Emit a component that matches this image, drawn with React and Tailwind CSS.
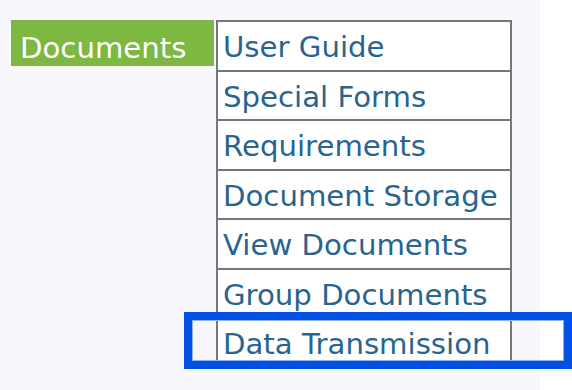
import React from "react";

const items = [
  "User Guide",
  "Special Forms",
  "Requirements",
  "Document Storage",
  "View Documents",
  "Group Documents",
  "Data Transmission",
];

export default function App() {
  return (
    <div
      className="relative w-[572px] h-[390px] bg-white overflow-hidden"
      style={{ fontFamily: '"DejaVu Sans", Verdana, sans-serif' }}
    >
      <div className="w-[540px] h-[390px] bg-[#f7f7fc] flex items-start pl-[11px] pt-[20px] gap-[2px]">
        <div className="w-[203px] h-[46px] bg-[#7db842] text-white text-[29.2px] leading-[46px] pl-[9px] pt-[5px]">
          Documents
        </div>
        <div className="w-[296px] border-x-2 border-b-2 border-[#74777c] bg-white">
          {items.map((t) => (
            <div
              key={t}
              className="h-[49.5px] border-t-2 border-[#74777c] text-[#28648f] text-[29.2px] leading-[47px] pl-[5px] pt-[2px] whitespace-nowrap"
            >
              {t}
            </div>
          ))}
        </div>
      </div>
      <div className="absolute left-[184px] top-[312px] w-[388px] h-[57px] border-[8px] border-[#0050e3]">
        <div className="w-full h-full border border-[#8fb2f0]" />
      </div>
    </div>
  );
}
